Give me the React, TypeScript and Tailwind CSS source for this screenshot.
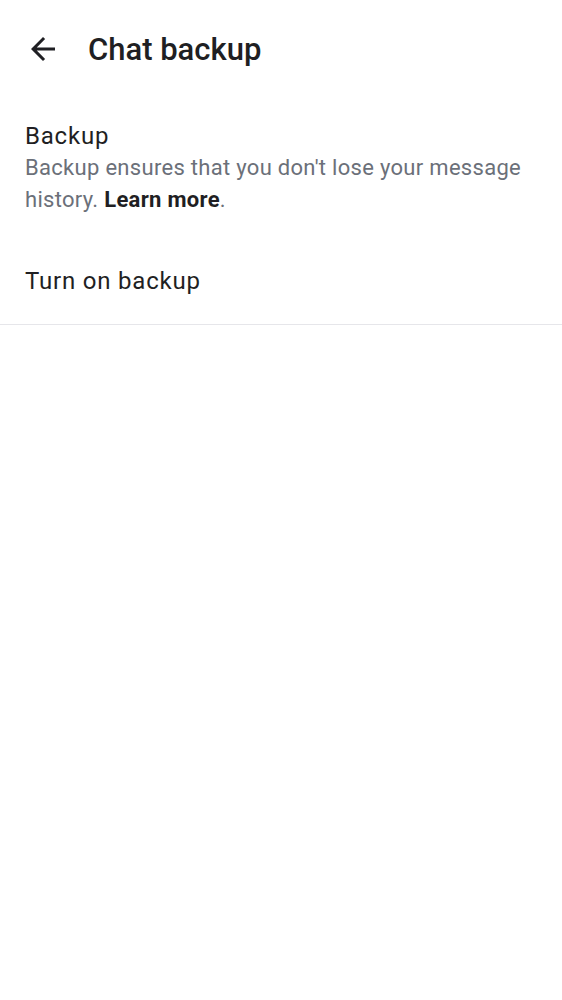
import React from "react";

export default function App() {
  return (
    <div className="min-h-[1000px] w-[562px] bg-white" style={{ fontFamily: "Roboto, 'Noto Sans', sans-serif" }}>
      <header className="flex h-[100px] items-center">
        <button className="mb-[3px] ml-[25px] flex h-[36px] w-[36px] items-center justify-center text-[#1f1f23]">
          <svg width="36" height="36" viewBox="0 0 24 24" fill="currentColor">
            <path d="M20 11H7.83l5.59-5.59L12 4l-8 8 8 8 1.41-1.41L7.83 13H20v-2z" />
          </svg>
        </button>
        <h1 className="ml-[27px] text-[31px] leading-[40px] font-medium text-[#1f1f23]">Chat backup</h1>
      </header>
      <section className="px-[25px] pt-[20px]">
        <div className="text-[24px] leading-[32px] tracking-[0.8px] text-[#1f1f23]">Backup</div>
        <p className="text-[22px] leading-[32px] tracking-[0.3px] text-[#6b7079]">
          Backup ensures that you don't lose your message history.{" "}
          <span className="font-bold text-[#1f1f23]">Learn more</span>.
        </p>
      </section>
      <div className="border-b border-[#e6e6ea] px-[25px] pb-[27px] pt-[49px]">
        <div className="text-[24px] leading-[32px] tracking-[0.8px] text-[#1f1f23]">Turn on backup</div>
      </div>
    </div>
  );
}
